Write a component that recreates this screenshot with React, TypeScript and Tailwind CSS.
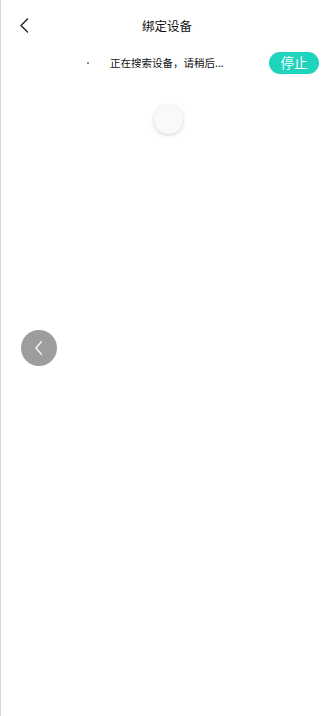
export default function App() {
  const font = { fontFamily: '"Noto Sans CJK SC", "Noto Sans", sans-serif' };
  return (
    <div className="relative w-[334px] h-[716px] bg-white border-l border-[#d6d6d6] overflow-hidden" style={font}>
      {/* header */}
      <div className="relative h-[52px] flex items-center justify-center">
        <button className="absolute left-[17px] top-[17px] w-[12px] h-[16px] flex items-center justify-center">
          <svg width="10" height="15" viewBox="0 0 10 15" fill="none">
            <path d="M8.5 1 L2 7.5 L8.5 14" stroke="#222" strokeWidth="1.4" strokeLinecap="round" strokeLinejoin="round" />
          </svg>
        </button>
        <span className="text-[12.5px] leading-none text-[#111] -ml-[1px]">绑定设备</span>
      </div>
      {/* searching row */}
      <div className="relative h-[22px] flex items-center">
        <div className="absolute left-[86px] top-[10px] w-[2px] h-[2px] bg-[#888]" />
        <span className="ml-[109px] text-[10.5px] leading-none text-[#111]">正在搜索设备，请稍后...</span>
        <button className="ml-auto mr-[15px] w-[50px] h-[22px] rounded-full bg-[#1fd3bd] text-white text-[13.5px] leading-none flex items-center justify-center">
          停止
        </button>
      </div>
      {/* spinner */}
      <div className="flex justify-center mt-[31px] pl-[1px]">
        <div className="w-[29px] h-[29px] rounded-full bg-[#f9f9f9] shadow-[0_1px_4px_rgba(0,0,0,0.18)]" />
      </div>
      {/* floating back */}
      <div className="absolute left-[20px] top-[330px] w-[36px] h-[36px] rounded-full bg-[#9d9d9d] flex items-center justify-center">
        <svg width="10" height="16" viewBox="0 0 10 16" fill="none">
          <path d="M7.5 1.5 L2 8 L7.5 14.5" stroke="#fff" strokeWidth="1.2" strokeLinecap="round" strokeLinejoin="round" />
        </svg>
      </div>
    </div>
  );
}
